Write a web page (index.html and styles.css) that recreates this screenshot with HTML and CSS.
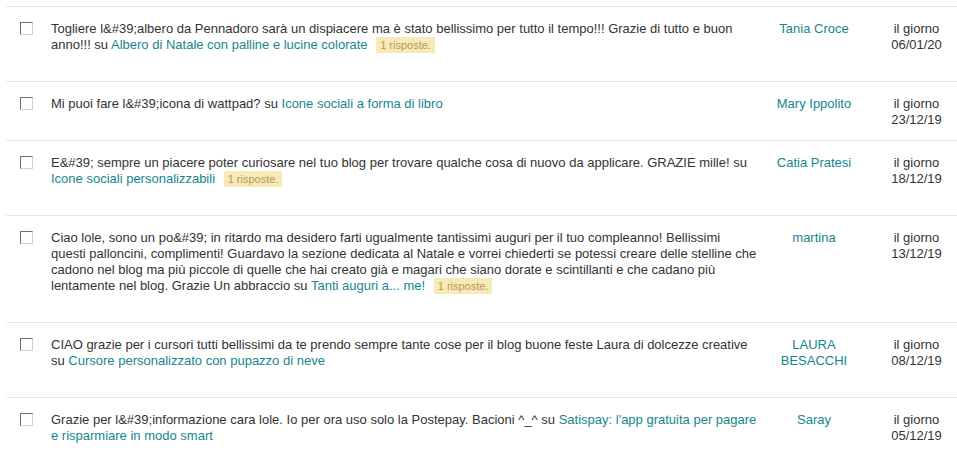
FILE: index.html
```html
<!DOCTYPE html>
<html lang="it">
<head>
    <meta charset="UTF-8">
    <title>Commenti</title>
    <link rel="stylesheet" href="styles.css">
</head>
<body>
    <div class="comments">
        <div class="comment">
            <div class="check"><span class="box"></span></div>
            <div class="text">Togliere l&amp;#39;albero da Pennadoro sarà un dispiacere ma è stato bellissimo per tutto il tempo!!! Grazie di tutto e buon anno!!! su <a href="#">Albero di Natale con palline e lucine colorate</a> <span class="replies">1 risposte.</span></div>
            <div class="author"><a href="#">Tania Croce</a></div>
            <div class="date">il giorno 06/01/20</div>
        </div>
        <div class="comment">
            <div class="check"><span class="box"></span></div>
            <div class="text">Mi puoi fare l&amp;#39;icona di wattpad? su <a href="#">Icone sociali a forma di libro</a></div>
            <div class="author"><a href="#">Mary Ippolito</a></div>
            <div class="date">il giorno 23/12/19</div>
        </div>
        <div class="comment">
            <div class="check"><span class="box"></span></div>
            <div class="text">E&amp;#39; sempre un piacere poter curiosare nel tuo blog per trovare qualche cosa di nuovo da applicare. GRAZIE mille! su <a href="#">Icone sociali personalizzabili</a> <span class="replies">1 risposte.</span></div>
            <div class="author"><a href="#">Catia Pratesi</a></div>
            <div class="date">il giorno 18/12/19</div>
        </div>
        <div class="comment">
            <div class="check"><span class="box"></span></div>
            <div class="text">Ciao lole, sono un po&amp;#39; in ritardo ma desidero farti ugualmente tantissimi auguri per il tuo compleanno! Bellissimi questi&nbsp;palloncini, complimenti! Guardavo la sezione dedicata al Natale e vorrei chiederti se potessi creare delle stelline che cadono nel blog ma più piccole di quelle che hai creato già e magari che siano dorate e scintillanti e che cadano più lentamente nel blog. Grazie Un abbraccio su <a href="#">Tanti auguri a... me!</a> <span class="replies">1 risposte.</span></div>
            <div class="author"><a href="#">martina</a></div>
            <div class="date">il giorno 13/12/19</div>
        </div>
        <div class="comment">
            <div class="check"><span class="box"></span></div>
            <div class="text">CIAO grazie per i cursori tutti bellissimi da te prendo sempre tante cose per il blog buone feste Laura di dolcezze creative su <a href="#">Cursore personalizzato con pupazzo di neve</a></div>
            <div class="author"><a href="#">LAURA BESACCHI</a></div>
            <div class="date">il giorno 08/12/19</div>
        </div>
        <div class="comment">
            <div class="check"><span class="box"></span></div>
            <div class="text">Grazie per l&amp;#39;informazione cara lole. Io per ora uso solo la Postepay. Bacioni ^_^ su <a href="#">Satispay: l'app gratuita per pagare e risparmiare in modo smart</a></div>
            <div class="author"><a href="#">Saray</a></div>
            <div class="date">il giorno 05/12/19</div>
        </div>
    </div>
</body>
</html>
```

FILE: styles.css
```css
body {
    margin: 0;
    background: #fff;
    font-family: "Liberation Sans", Arial, sans-serif;
    font-size: 13px;
    line-height: 16px;
    color: #333;
}

a {
    color: #14868f;
    text-decoration: none;
}

.comments {
    margin: 6px 0 0 6px;
}

/* one comment per row */
.comment {
    display: grid;
    grid-template-columns: 45px 711px 104px 1fr;
    border-top: 1px solid #e8e8e8;
    padding-top: 14px;
}

.check {
    padding-left: 14px;
}

.box {
    display: block;
    width: 11px;
    height: 11px;
    margin-top: 1px;
    border: 1px solid;
    border-color: #6d6d6d #d4d0c8 #d4d0c8 #6d6d6d;
    background: #fff;
}

.text {
    padding-bottom: 28px;
}

.replies {
    display: inline-block;
    margin-left: 5px;
    padding: 1px 4px 0;
    font-size: 11px;
    line-height: 15px;
    background: #f7e9b8;
    color: #b59b52;
    vertical-align: top;
}

.author {
    padding: 0 8px;
    text-align: center;
}

.date {
    padding-left: 10px;
    text-align: center;
}
```
